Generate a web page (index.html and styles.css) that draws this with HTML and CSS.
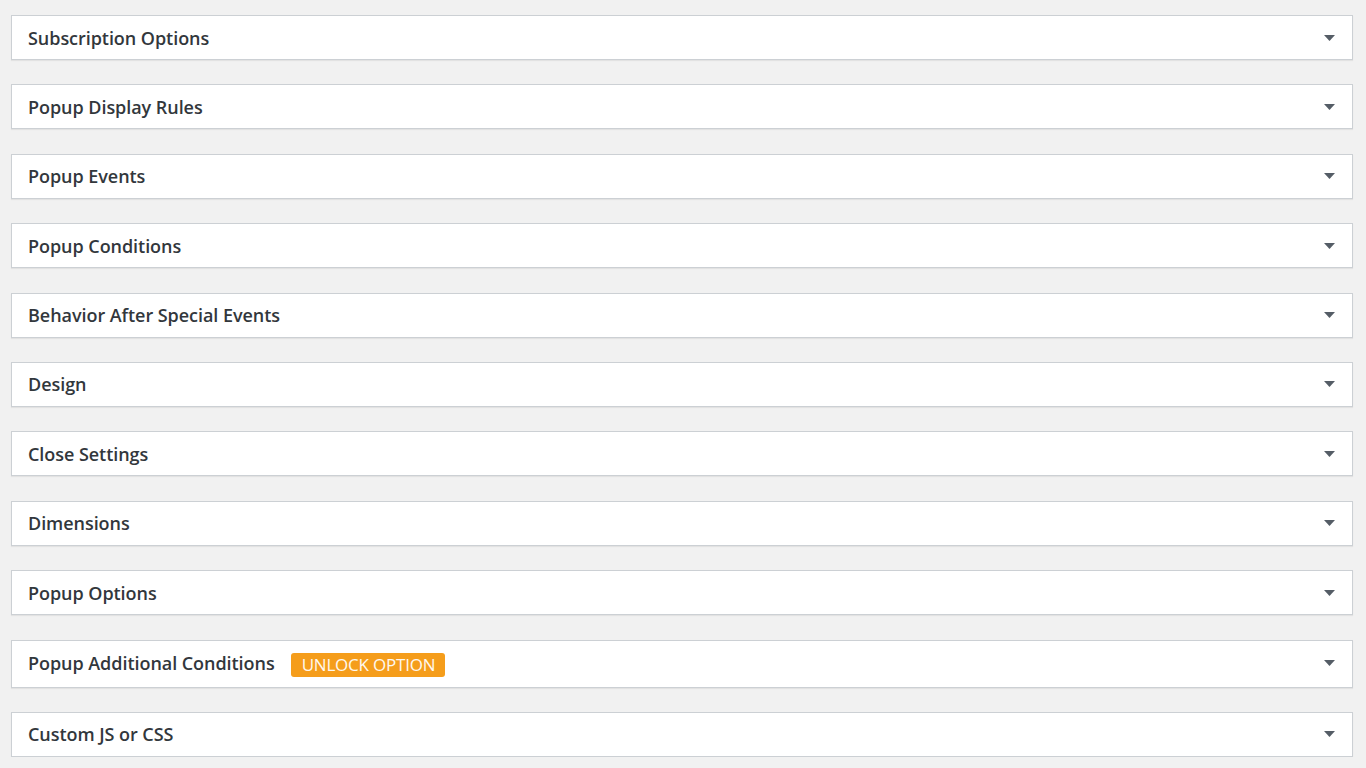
FILE: index.html
```html
<!DOCTYPE html>
<html>
<head>
  <title>Popup Settings</title>
  <link rel="stylesheet" href="styles.css">
</head>
<body>

  <div class="boxes">
    <div class="box"><div class="box-head"><span class="box-title">Subscription Options</span><svg class="toggle" width="11" height="6" viewBox="0 0 11 6"><path d="M0 0h11L5.5 6z"/></svg></div></div>
    <div class="box"><div class="box-head"><span class="box-title">Popup Display Rules</span><svg class="toggle" width="11" height="6" viewBox="0 0 11 6"><path d="M0 0h11L5.5 6z"/></svg></div></div>
    <div class="box"><div class="box-head"><span class="box-title">Popup Events</span><svg class="toggle" width="11" height="6" viewBox="0 0 11 6"><path d="M0 0h11L5.5 6z"/></svg></div></div>
    <div class="box"><div class="box-head"><span class="box-title">Popup Conditions</span><svg class="toggle" width="11" height="6" viewBox="0 0 11 6"><path d="M0 0h11L5.5 6z"/></svg></div></div>
    <div class="box"><div class="box-head"><span class="box-title">Behavior After Special Events</span><svg class="toggle" width="11" height="6" viewBox="0 0 11 6"><path d="M0 0h11L5.5 6z"/></svg></div></div>
    <div class="box"><div class="box-head"><span class="box-title">Design</span><svg class="toggle" width="11" height="6" viewBox="0 0 11 6"><path d="M0 0h11L5.5 6z"/></svg></div></div>
    <div class="box"><div class="box-head"><span class="box-title">Close Settings</span><svg class="toggle" width="11" height="6" viewBox="0 0 11 6"><path d="M0 0h11L5.5 6z"/></svg></div></div>
    <div class="box"><div class="box-head"><span class="box-title">Dimensions</span><svg class="toggle" width="11" height="6" viewBox="0 0 11 6"><path d="M0 0h11L5.5 6z"/></svg></div></div>
    <div class="box"><div class="box-head"><span class="box-title">Popup Options</span><svg class="toggle" width="11" height="6" viewBox="0 0 11 6"><path d="M0 0h11L5.5 6z"/></svg></div></div>
    <div class="box box-locked"><div class="box-head"><span class="box-title">Popup Additional Conditions</span><span class="unlock">UNLOCK OPTION</span><svg class="toggle" width="11" height="6" viewBox="0 0 11 6"><path d="M0 0h11L5.5 6z"/></svg></div></div>
    <div class="box"><div class="box-head"><span class="box-title">Custom JS or CSS</span><svg class="toggle" width="11" height="6" viewBox="0 0 11 6"><path d="M0 0h11L5.5 6z"/></svg></div></div>
  </div>

</body>
</html>
```

FILE: styles.css
```css
body {
  margin: 0;
  padding: 15px 13px 0 11px;
  background: #f1f1f1;
  font-family: "Open Sans", "Noto Sans", sans-serif;
  color: #32373c;
}

.boxes {
  display: flex;
  flex-direction: column;
  gap: 24.4px;
}

.box {
  background: #fff;
  border: 1px solid #ccd0d4;
  box-shadow: 0 1px 1px rgba(0, 0, 0, 0.06);
}

.box-head {
  display: flex;
  align-items: center;
  min-height: 43px;
  padding: 0 17px 0 16px;
  box-sizing: border-box;
}

.box-title {
  font-size: 18px;
  font-weight: 600;
  letter-spacing: -0.05px;
}

.unlock {
  margin: 4px 0 0 16px;
  padding: 0 10px 0 11px;
  height: 24px;
  line-height: 24px;
  background: #f59d1b;
  border-radius: 3px;
  color: #fff8ee;
  font-size: 17px;
  letter-spacing: -0.2px;
}

.box-locked .box-head {
  min-height: 46px;
  padding-bottom: 2px;
}

.toggle {
  margin-left: auto;
  fill: #555d66;
}
```
